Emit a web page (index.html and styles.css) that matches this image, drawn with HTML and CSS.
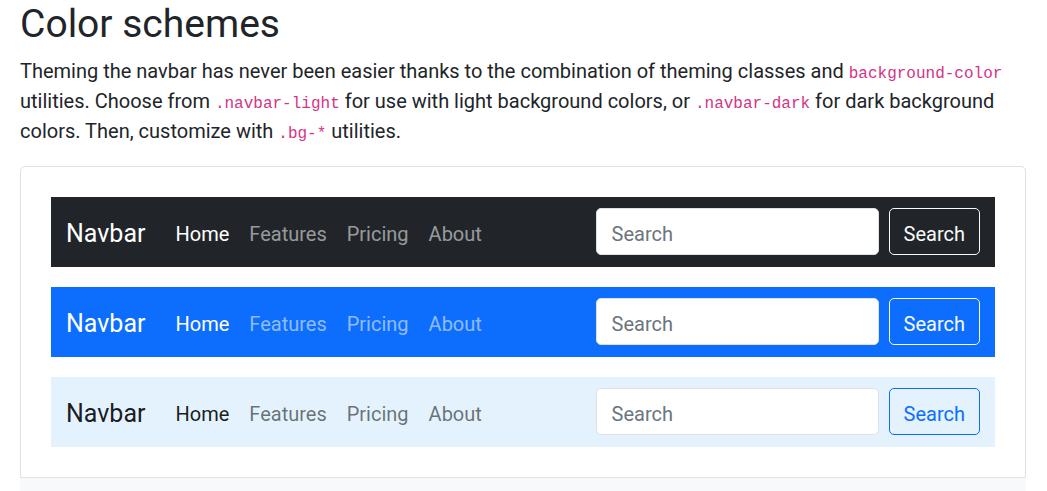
FILE: index.html
```html
<!DOCTYPE html>
<html>
<head>
<meta charset="utf-8">
<title>Color schemes</title>
<link rel="stylesheet" href="styles.css">
</head>
<body>
<main class="page">
  <h2 class="title">Color schemes</h2>
  <p class="lead">Theming the navbar has never been easier thanks to the combination of theming classes and <code>background-color</code> utilities. Choose from <code>.navbar-light</code> for use with light background colors, or <code>.navbar-dark</code> for dark background colors. Then, customize with <code>.bg-*</code> utilities.</p>

  <div class="example">
    <nav class="navbar navbar-dark bg-dark">
      <a class="brand" href="#">Navbar</a>
      <ul class="nav">
        <li><a class="link active" href="#">Home</a></li>
        <li><a class="link" href="#">Features</a></li>
        <li><a class="link" href="#">Pricing</a></li>
        <li><a class="link" href="#">About</a></li>
      </ul>
      <form class="search">
        <input class="input" type="search" placeholder="Search">
        <button class="btn btn-light" type="button">Search</button>
      </form>
    </nav>

    <nav class="navbar navbar-dark bg-primary">
      <a class="brand" href="#">Navbar</a>
      <ul class="nav">
        <li><a class="link active" href="#">Home</a></li>
        <li><a class="link" href="#">Features</a></li>
        <li><a class="link" href="#">Pricing</a></li>
        <li><a class="link" href="#">About</a></li>
      </ul>
      <form class="search">
        <input class="input" type="search" placeholder="Search">
        <button class="btn btn-light" type="button">Search</button>
      </form>
    </nav>

    <nav class="navbar navbar-light bg-light-blue">
      <a class="brand" href="#">Navbar</a>
      <ul class="nav">
        <li><a class="link active" href="#">Home</a></li>
        <li><a class="link" href="#">Features</a></li>
        <li><a class="link" href="#">Pricing</a></li>
        <li><a class="link" href="#">About</a></li>
      </ul>
      <form class="search">
        <input class="input" type="search" placeholder="Search">
        <button class="btn btn-primary" type="button">Search</button>
      </form>
    </nav>
  </div>
  <div class="highlight"></div>
</main>
</body>
</html>
```
FILE: styles.css
```css
* { box-sizing: border-box; }
html, body { margin: 0; padding: 0; background: #fff; }
body {
  font-family: Roboto, "Noto Sans", sans-serif;
  color: #212529;
  font-size: 20px;
  line-height: 30px;
  overflow: hidden;
}
.page { padding: 0 21px 0 20px; }
.title {
  margin: 0 0 8px;
  font-size: 39px;
  line-height: 48px;
  font-weight: 400;
}
.lead { margin: 0 0 20px; }
code {
  font-family: "Liberation Mono", "DejaVu Sans Mono", monospace;
  font-size: 16px;
  line-height: 1;
  color: #d63384;
}
.example {
  border: 1px solid #dee2e6;
  border-radius: 5px 5px 0 0;
  padding: 30px;
  display: flex;
  flex-direction: column;
  gap: 20px;
}
.highlight { background: #f8f9fa; height: 40px; }
.navbar {
  display: flex;
  align-items: center;
  height: 70px;
  padding: 10px 15px;
}
.bg-dark { background: #212529; }
.bg-primary { background: #0d6efd; }
.bg-light-blue { background: #e3f2fd; }
.brand {
  font-size: 25px;
  line-height: 37px;
  padding: 8px 0 5px;
  margin-right: 20px;
  text-decoration: none;
}
.nav {
  list-style: none;
  margin: 0;
  padding: 0;
  display: flex;
}
.link {
  display: block;
  padding: 12px 10px 8px;
  text-decoration: none;
}
.navbar-dark .brand, .navbar-dark .link.active { color: #fff; }
.navbar-dark .link { color: rgba(255,255,255,.55); }
.navbar-light .brand, .navbar-light .link.active { color: rgba(0,0,0,.9); }
.navbar-light .link { color: rgba(0,0,0,.55); }
.search {
  margin: -1px 0 0 auto;
  display: flex;
  gap: 10px;
}
.input {
  width: 283px;
  height: 47px;
  padding: 9px 15px 5px;
  font: inherit;
  color: #212529;
  background: #fff;
  border: 1px solid #dee2e6;
  border-radius: 5px;
}
.input::placeholder { color: #6c757d; }
.btn {
  height: 47px;
  padding: 9px 14px 5px;
  font: inherit;
  background: transparent;
  border: 1px solid;
  border-radius: 5px;
}
.btn-light { color: #f8f9fa; border-color: #f8f9fa; }
.btn-primary { color: #0d6efd; border-color: #0d6efd; }
```
